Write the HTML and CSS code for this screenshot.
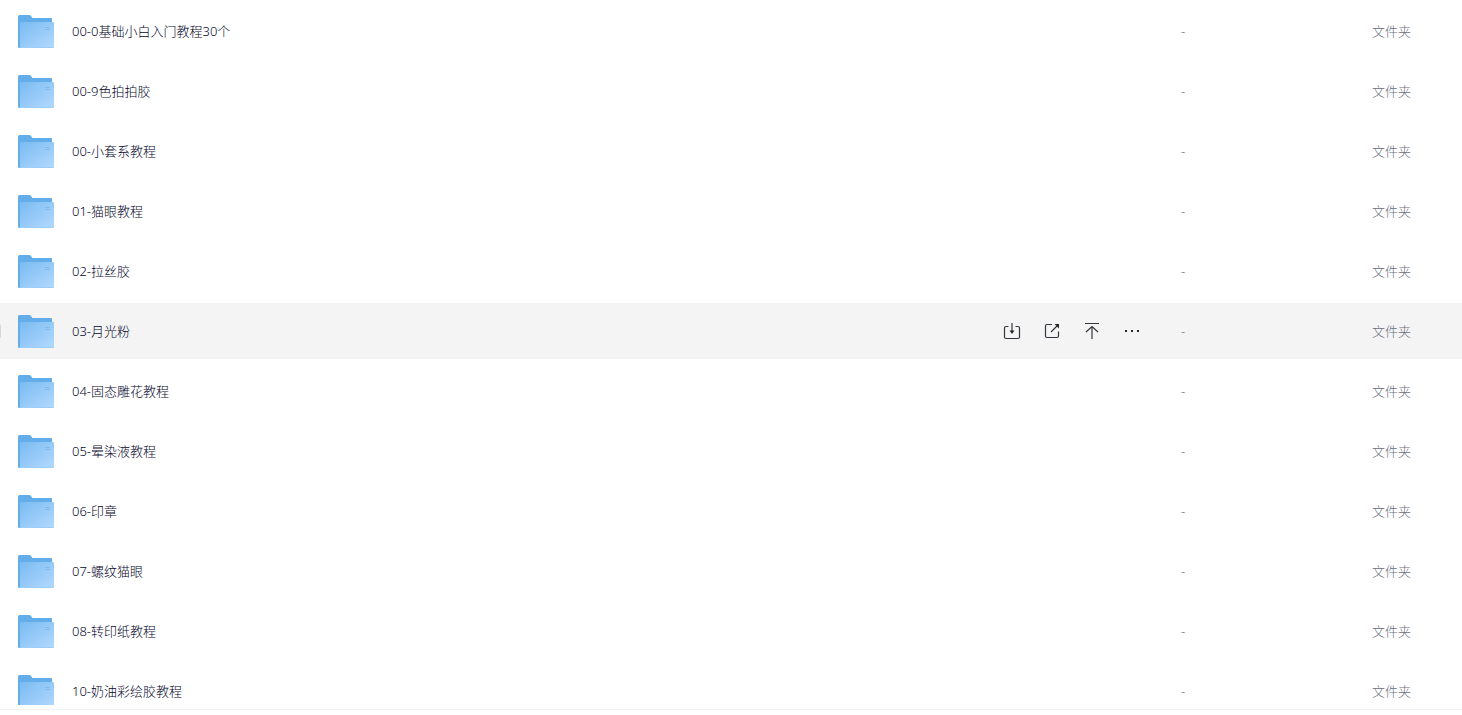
FILE: index.html
```html
<!DOCTYPE html>
<html lang="zh-CN">
<head>
<meta charset="utf-8">
<title>文件夹</title>
<link rel="stylesheet" href="styles.css">
</head>
<body>
<svg class="sprite" aria-hidden="true">
  <defs>
    <linearGradient id="front" x1="0" y1="0" x2="1" y2="1">
      <stop offset="0" stop-color="#7abbf2"/>
      <stop offset="1" stop-color="#b3d9fe"/>
    </linearGradient>
  </defs>
  <symbol id="folder" viewBox="0 -1 36 34">
    <path d="M0 1.500Q0 0 1.500 0H11.500Q12.300 0 12.800 .7L14.500 3H33Q34 3 34 4V31H2Q0 33 0 31Z" fill="#62adea"/>
    <path d="M0 1V31.500Q0 33 1.500 33H4V1Z" fill="#62adea"/>
    <path d="M2 8Q2 7 3 7H35Q36 7 36 8V31.500Q36 33 34.500 33H2Z" fill="url(#front)"/>
    <path d="M2 32H36Q36 33 34.500 33H2Z" fill="#9dcdf9"/>
    <path d="M27 12.500H32M27 14.500H32" stroke="#7fbcf3"/>
  </symbol>
</svg>
<main class="panel">
  <div class="viewport">
    <table class="files">
      <colgroup><col><col class="col-actions"><col class="col-size"><col class="col-type"></colgroup>
      <tbody>
        <tr><td class="name"><a href="#"><svg class="folder"><use href="#folder"/></svg>00-0基础小白入门教程30个</a></td><td></td><td>-</td><td>文件夹</td></tr>
        <tr><td class="name"><a href="#"><svg class="folder"><use href="#folder"/></svg>00-9色拍拍胶</a></td><td></td><td>-</td><td>文件夹</td></tr>
        <tr><td class="name"><a href="#"><svg class="folder"><use href="#folder"/></svg>00-小套系教程</a></td><td></td><td>-</td><td>文件夹</td></tr>
        <tr><td class="name"><a href="#"><svg class="folder"><use href="#folder"/></svg>01-猫眼教程</a></td><td></td><td>-</td><td>文件夹</td></tr>
        <tr><td class="name"><a href="#"><svg class="folder"><use href="#folder"/></svg>02-拉丝胶</a></td><td></td><td>-</td><td>文件夹</td></tr>
        <tr class="active">
          <td class="name"><input class="check" type="checkbox" aria-label="选择 03-月光粉"><a href="#"><svg class="folder"><use href="#folder"/></svg>03-月光粉</a></td>
          <td>
            <div class="actions">
              <button type="button" aria-label="下载"><svg class="icon" viewBox="0 0 18 18"><path d="M5.500 4.500H3Q1.500 4.500 1.500 6V15Q1.500 16.500 3 16.500H15Q16.500 16.500 16.500 15V6Q16.500 4.500 15 4.500H12.500M9 1V10"/><path class="solid" d="M6.500 8.500H11.500L9 12Z"/></svg></button>
              <button type="button" aria-label="分享"><svg class="icon" viewBox="0 0 18 18"><path d="M9 2.500H4Q2.500 2.500 2.500 4V14Q2.500 15.500 4 15.500H14Q15.500 15.500 15.500 14V9.500M8 10L14 4"/><path class="solid" d="M11.500 2H16V6.500Z"/></svg></button>
              <button type="button" aria-label="置顶"><svg class="icon" viewBox="0 0 18 18"><path d="M2 1.500H16M9 17V4.500M3 10L9 4.500L15 10"/></svg></button>
              <button type="button" aria-label="更多"><svg class="icon" viewBox="0 0 18 18"><path class="solid" d="M2 8H4V10H2ZM8 8H10V10H8ZM14 8H16V10H14Z"/></svg></button>
            </div>
          </td>
          <td>-</td><td>文件夹</td>
        </tr>
        <tr><td class="name"><a href="#"><svg class="folder"><use href="#folder"/></svg>04-固态雕花教程</a></td><td></td><td>-</td><td>文件夹</td></tr>
        <tr><td class="name"><a href="#"><svg class="folder"><use href="#folder"/></svg>05-晕染液教程</a></td><td></td><td>-</td><td>文件夹</td></tr>
        <tr><td class="name"><a href="#"><svg class="folder"><use href="#folder"/></svg>06-印章</a></td><td></td><td>-</td><td>文件夹</td></tr>
        <tr><td class="name"><a href="#"><svg class="folder"><use href="#folder"/></svg>07-螺纹猫眼</a></td><td></td><td>-</td><td>文件夹</td></tr>
        <tr><td class="name"><a href="#"><svg class="folder"><use href="#folder"/></svg>08-转印纸教程</a></td><td></td><td>-</td><td>文件夹</td></tr>
        <tr><td class="name"><a href="#"><svg class="folder"><use href="#folder"/></svg>10-奶油彩绘胶教程</a></td><td></td><td>-</td><td>文件夹</td></tr>
      </tbody>
    </table>
  </div>
</main>
</body>
</html>
```

FILE: styles.css
```css
* {
  box-sizing: border-box;
}

body {
  margin: 0;
  background: #fff;
  color: #03081a;
  font-family: "Noto Sans", "Noto Sans CJK SC", sans-serif;
  font-size: 13px;
  font-weight: 300;
  line-height: 20px;
}

.sprite {
  position: absolute;
  width: 0;
  height: 0;
}

.panel {
  display: flex;
  flex-direction: column;
  height: calc(100vh - 5px);
  padding-bottom: 4px;
  border-bottom: 1px solid #f1f2f4;
}

.viewport {
  flex: 1;
  min-height: 0;
  overflow: hidden;
}

.files {
  width: 100%;
  margin-top: -1px;
  table-layout: fixed;
  border-collapse: separate;
  border-spacing: 0 4px;
}

.col-actions {
  width: 178px;
}

.col-size {
  width: 191px;
}

.col-type {
  width: 90px;
}

.files td {
  height: 56px;
  padding: 0;
  vertical-align: middle;
  color: #6c6d80;
}

.files .name {
  position: relative;
  padding-left: 18px;
}

.name a {
  display: flex;
  align-items: center;
  gap: 18px;
  color: #05062a;
  text-decoration: none;
}

.folder {
  width: 36px;
  height: 34px;
  flex: none;
}

.files .active td {
  background: #f4f4f4;
}

.check {
  appearance: none;
  position: absolute;
  top: 20px;
  left: -15px;
  width: 16px;
  height: 16px;
  margin: 0;
  border: 1px solid #d6d6d8;
  border-radius: 3px;
  background: #fff;
}

.actions {
  display: flex;
  gap: 22px;
}

.actions button {
  display: flex;
  width: 18px;
  height: 18px;
  padding: 0;
  border: 0;
  background: none;
}

.icon {
  width: 18px;
  height: 18px;
  fill: none;
  stroke: #35353f;
  stroke-width: 1.2;
}

.icon .solid {
  fill: #25252d;
  stroke: none;
}
```
